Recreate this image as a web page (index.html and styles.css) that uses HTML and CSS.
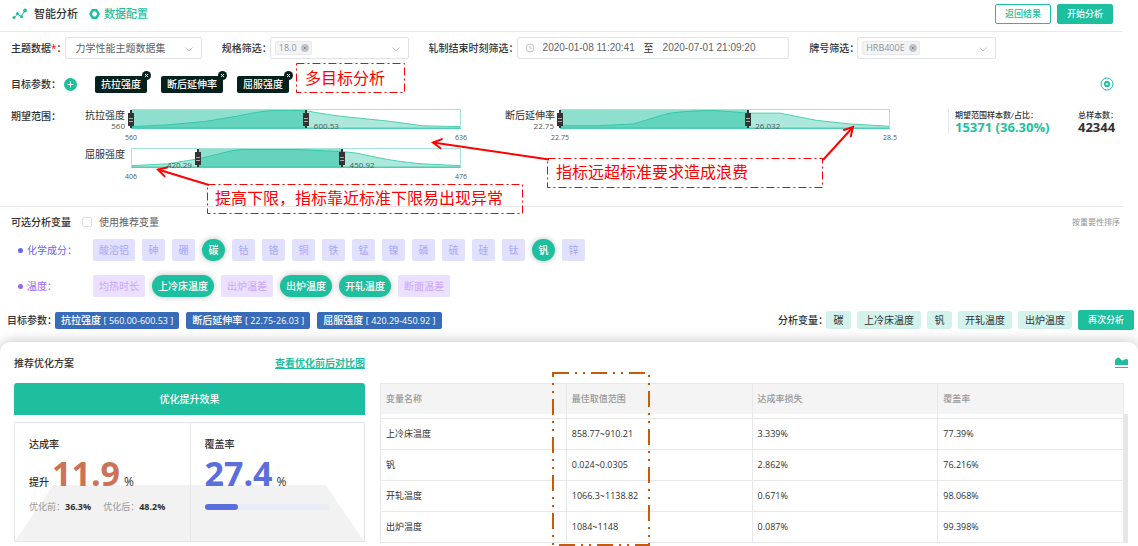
FILE: index.html
```html
<!DOCTYPE html>
<html lang="zh-CN">
<head>
<meta charset="UTF-8">
<title>智能分析</title>
<link rel="stylesheet" href="styles.css">
</head>
<body>
<header class="header">
  <svg class="logo" width="15" height="12" viewBox="0 0 15 12">
    <path d="M2 10L5.500 6L9 8.500L13 2.500" fill="none" stroke="#1dbf9e" stroke-width="1"/>
    <circle cx="2" cy="9.500" r="1.600" fill="#1dbf9e"/><circle cx="5.500" cy="5.500" r="1.500" fill="#1dbf9e"/>
    <circle cx="9.500" cy="8.500" r="1.500" fill="#1dbf9e"/><circle cx="13" cy="2.500" r="1.900" fill="#1dbf9e"/>
  </svg>
  <h1 class="title">智能分析</h1>
  <a class="config" href="#config">
    <svg width="11" height="10" viewBox="0 0 11 10"><path d="M3.500 1.300h4L9.600 5L7.500 8.700h-4L1.400 5z" fill="none" stroke="#1dbf9e" stroke-width="2.500" stroke-linejoin="round"/></svg>
    数据配置
  </a>
  <div class="header-buttons">
    <button class="btn btn-plain">返回结果</button>
    <button class="btn">开始分析</button>
  </div>
</header>

<section class="filters">
  <div class="filter">
    <label class="label" for="dataset">主题数据<span class="required">*</span>：</label>
    <div class="control">
      <select id="dataset"><option>力学性能主题数据集</option></select>
      <svg class="arrow" width="8" height="5" viewBox="0 0 8 5"><path d="M.5.500L4 4L7.500.500"/></svg>
    </div>
  </div>
  <div class="filter">
    <span class="label">规格筛选：</span>
    <div class="control">
      <span class="tag">18.0 <button class="tag-close" aria-label="移除 18.0"><svg width="8" height="8" viewBox="0 0 8 8"><path d="M2.500 2.500l3 3M5.500 2.500l-3 3"/></svg></button></span>
      <svg class="arrow" width="8" height="5" viewBox="0 0 8 5"><path d="M.5.500L4 4L7.500.500"/></svg>
    </div>
  </div>
  <div class="filter filter-wide">
    <label class="label" for="start">轧制结束时刻筛选：</label>
    <div class="control">
      <svg class="clock" width="10" height="10" viewBox="0 0 10 10"><circle cx="5" cy="5" r="4"/><path d="M5 2.500V5.200H7.300"/></svg>
      <input class="date" type="text" id="start" value="2020-01-08 11:20:41">
      <span class="to">至</span>
      <input class="date" type="text" aria-label="结束时刻" value="2020-07-01 21:09:20">
    </div>
  </div>
  <div class="filter">
    <span class="label">牌号筛选：</span>
    <div class="control">
      <span class="tag">HRB400E <button class="tag-close" aria-label="移除 HRB400E"><svg width="8" height="8" viewBox="0 0 8 8"><path d="M2.500 2.500l3 3M5.500 2.500l-3 3"/></svg></button></span>
      <svg class="arrow" width="8" height="5" viewBox="0 0 8 5"><path d="M.5.500L4 4L7.500.500"/></svg>
    </div>
  </div>
</section>

<section class="targets">
  <span class="label">目标参数：</span>
  <button class="add" aria-label="添加"><svg width="13" height="13" viewBox="0 0 13 13"><circle cx="6.500" cy="6.500" r="6.500" fill="#1dbf9e"/><path d="M3.500 6.500h6M6.500 3.500v6" stroke="#fff"/></svg></button>
  <span class="target">抗拉强度<button class="remove" aria-label="移除"><svg width="9" height="9" viewBox="0 0 9 9"><path d="M3 3l3 3M6 3l-3 3"/></svg></button></span>
  <span class="target">断后延伸率<button class="remove" aria-label="移除"><svg width="9" height="9" viewBox="0 0 9 9"><path d="M3 3l3 3M6 3l-3 3"/></svg></button></span>
  <span class="target">屈服强度<button class="remove" aria-label="移除"><svg width="9" height="9" viewBox="0 0 9 9"><path d="M3 3l3 3M6 3l-3 3"/></svg></button></span>
  <button class="settings" aria-label="设置"><svg width="14" height="14" viewBox="0 0 14 14"><circle cx="7" cy="7" r="6" fill="none" stroke="#1dbf9e"/><path d="M5.800 4.900h2.400L9.400 7L8.200 9.100H5.800L4.600 7z" fill="none" stroke="#1dbf9e" stroke-width="2" stroke-linejoin="round"/></svg></button>
</section>

<section class="ranges">
  <span class="label">期望范围：</span>
  <div class="range-grid">
    <div class="range">
      <span class="range-name">抗拉强度</span>
      <div class="chart">
        <svg viewBox="0 0 330 20" preserveAspectRatio="none">
          <path class="area" d="M0 18.500L36 16.500L72 13L105 7Q130 1 143 .5Q160 0 176 1Q200 6 219 8L259 12.500L292 17.500L330 18.500V20H0z"/>
        </svg>
        <div class="selected" style="left: 0%; width: 53.300%"></div>
        <input type="range" aria-label="抗拉强度下限" min="560" max="636" step="any" value="560">
        <input type="range" aria-label="抗拉强度上限" min="560" max="636" step="any" value="600.53">
        <span class="value low" style="right: 100%">560</span>
        <span class="value high" style="left: 53.300%">600.53</span>
        <span class="axis axis-min">560</span><span class="axis axis-max">636</span>
      </div>
    </div>
    <div class="range">
      <span class="range-name">断后延伸率</span>
      <div class="chart">
        <svg viewBox="0 0 330 20" preserveAspectRatio="none">
          <path class="area" d="M0 17.500H37L73 15.500L104 5Q110 3 122 2Q147 0 160 1L188 3.500H220L257 11.500L290 15.500L330 18V20H0z"/>
        </svg>
        <div class="selected" style="left: 0%; width: 57.100%"></div>
        <input type="range" aria-label="断后延伸率下限" min="22.75" max="28.5" step="any" value="22.75">
        <input type="range" aria-label="断后延伸率上限" min="22.75" max="28.5" step="any" value="26.032">
        <span class="value low" style="right: 100%">22.75</span>
        <span class="value high" style="left: 57.100%">26.032</span>
        <span class="axis axis-min">22.75</span><span class="axis axis-max">28.5</span>
      </div>
    </div>
    <div class="range">
      <span class="range-name">屈服强度</span>
      <div class="chart">
        <svg viewBox="0 0 330 20" preserveAspectRatio="none">
          <path class="area" d="M0 18.500L36 16.500L69 10.500L100 2Q108 .5 115 .5H165L211 3Q226 4 234 6.500L256 11.500Q280 15.500 292 16.500L330 18.500V20H0z"/>
        </svg>
        <div class="selected" style="left: 20.400%; width: 43.800%"></div>
        <input type="range" aria-label="屈服强度下限" min="406" max="476" step="any" value="420.29">
        <input type="range" aria-label="屈服强度上限" min="406" max="476" step="any" value="450.92">
        <span class="value low" style="right: 79.600%">420.29</span>
        <span class="value high" style="left: 64.200%">450.92</span>
        <span class="axis axis-min">406</span><span class="axis axis-max">476</span>
      </div>
    </div>
  </div>
  <div class="stats">
    <div class="stat stat-main">期望范围样本数/占比：<strong class="green">15371 (36.30%)</strong></div>
    <div class="stat">总样本数：<strong>42344</strong></div>
  </div>
</section>

<section class="variables">
  <div class="variables-head">
    <h2>可选分析变量</h2>
    <label class="recommend"><input type="checkbox">使用推荐变量</label>
    <span class="sort">按重要性排序</span>
  </div>
  <div class="group chemistry">
    <span class="group-name">化学成分：</span>
    <button class="chip">酸溶铝</button>
    <button class="chip">砷</button>
    <button class="chip">硼</button>
    <button class="chip active">碳</button>
    <button class="chip">钴</button>
    <button class="chip">铬</button>
    <button class="chip">铜</button>
    <button class="chip">铁</button>
    <button class="chip">锰</button>
    <button class="chip">镍</button>
    <button class="chip">磷</button>
    <button class="chip">硫</button>
    <button class="chip">硅</button>
    <button class="chip">钛</button>
    <button class="chip active">钒</button>
    <button class="chip">锌</button>
  </div>
  <div class="group temperature">
    <span class="group-name">温度：</span>
    <button class="chip">均热时长</button>
    <button class="chip active">上冷床温度</button>
    <button class="chip">出炉温差</button>
    <button class="chip active">出炉温度</button>
    <button class="chip active">开轧温度</button>
    <button class="chip">断面温差</button>
  </div>
</section>

<section class="summary">
  <span class="label">目标参数：</span>
  <span class="summary-target">抗拉强度 <small>[ 560.00-600.53 ]</small></span>
  <span class="summary-target">断后延伸率 <small>[ 22.75-26.03 ]</small></span>
  <span class="summary-target">屈服强度 <small>[ 420.29-450.92 ]</small></span>
  <span class="label summary-right">分析变量：</span>
  <span class="summary-var">碳</span>
  <span class="summary-var">上冷床温度</span>
  <span class="summary-var">钒</span>
  <span class="summary-var">开轧温度</span>
  <span class="summary-var">出炉温度</span>
  <button class="btn">再次分析</button>
</section>

<main class="panel">
  <div class="plan">
    <div class="panel-head">
      <h2>推荐优化方案</h2>
      <a href="#compare">查看优化前后对比图</a>
    </div>
    <div class="banner">优化提升效果</div>
    <div class="cards">
      <div class="card">
        <h3>达成率</h3>
        <div class="figure">提升<b class="orange">11.9</b><span class="percent">%</span></div>
        <div class="compare"><span>优化前：<b>36.3%</b></span><span>优化后：<b>48.2%</b></span></div>
      </div>
      <div class="card">
        <h3>覆盖率</h3>
        <div class="figure"><b class="blue">27.4</b><span class="percent">%</span></div>
        <div class="progress"><div class="progress-bar" style="width: 27.400%"></div></div>
      </div>
    </div>
  </div>
  <div class="result">
    <div class="panel-head">
      <button class="chart-toggle" aria-label="图表"><svg width="13" height="12" viewBox="0 0 13 12"><path d="M0 8V3Q2 0 4 .5Q6 3 7.500 3.500Q10 1.500 12 2L13 3V8z" fill="#1dbf9e"/><path d="M0 10.500h13" stroke="#1dbf9e" stroke-width="1"/></svg></button>
    </div>
    <div class="table-wrap">
      <table>
        <thead>
          <tr><th>变量名称</th><th>最佳取值范围</th><th>达成率损失</th><th>覆盖率</th></tr>
        </thead>
        <tbody>
          <tr class="spacer"><td></td><td></td><td></td><td></td></tr>
          <tr><td>上冷床温度</td><td>858.77~910.21</td><td>3.339%</td><td>77.39%</td></tr>
          <tr><td>钒</td><td>0.024~0.0305</td><td>2.862%</td><td>76.216%</td></tr>
          <tr><td>开轧温度</td><td>1066.3~1138.82</td><td>0.671%</td><td>98.068%</td></tr>
          <tr><td>出炉温度</td><td>1084~1148</td><td>0.087%</td><td>99.398%</td></tr>
        </tbody>
      </table>
      <div class="scrollbar"></div>
    </div>
  </div>
</main>

<!-- notes drawn over the page -->
<svg class="notes" width="1138" height="546" viewBox="0 0 1138 546">
  <defs>
    <marker id="head" markerUnits="userSpaceOnUse" markerWidth="14" markerHeight="14" refX="11" refY="7" orient="auto">
      <path d="M2 2L11 7L2 12" fill="none" stroke="#f00" stroke-width="2"/>
    </marker>
  </defs>
  <rect class="note-box" x="296.500" y="63.500" width="108" height="29"/>
  <rect class="note-box" x="547.500" y="158.500" width="275" height="29"/>
  <rect class="note-box" x="207.500" y="184.500" width="315" height="29"/>
  <rect class="note-column" x="553" y="373" width="96" height="172"/>
  <path class="note-line" d="M549 159.500L433 142.500" marker-end="url(#head)"/>
  <path class="note-line" d="M823 160L853 127" marker-end="url(#head)"/>
  <path class="note-line" d="M209 185L158 169.500" marker-end="url(#head)"/>
  <text x="305" y="84">多目标分析</text>
  <text x="556" y="178">指标远超标准要求造成浪费</text>
  <text x="215" y="204">提高下限，指标靠近标准下限易出现异常</text>
</svg>
</body>
</html>
```
FILE: styles.css
```css
* {
  box-sizing: border-box;
}
body {
  margin: 0;
  font-family: "Open Sans", "Noto Sans CJK SC", sans-serif;
  font-size: 10px;
  line-height: 14px;
  color: #303133;
  background: #fff;
}
h1, h2, h3 {
  margin: 0;
  font-size: 10px;
  font-weight: 500;
}
button, input, select {
  font: inherit;
  margin: 0;
}
button {
  padding: 0;
  border: none;
  background: none;
  cursor: pointer;
}
svg {
  display: block;
}
.label {
  flex: none;
  font-weight: 500;
  white-space: nowrap;
}
.filter .label, .summary .label {
  margin-right: -2px; /* the full-width colon has empty space after it */
}
.btn {
  height: 20px;
  width: 56px;
  border: 1px solid #1dbf9e;
  border-radius: 2px;
  background: #1dbf9e;
  color: #fff;
  font-size: 9px;
  font-weight: 500;
  line-height: 12px;
}
.btn-plain {
  background: #fff;
  color: #1dbf9e;
}

/* header */
.header {
  display: flex;
  align-items: center;
  height: 32px;
  margin-right: 15px;
  padding: 0 10px 4px 12px;
  border-bottom: 1px solid #e6e8ec;
}
.title {
  margin: 0 11px 0 7px;
  font-size: 11px;
}
.config {
  display: flex;
  align-items: center;
  gap: 4px;
  font-size: 11px;
  font-weight: 500;
  color: #1dbf9e;
  text-decoration: none;
}
.header-buttons {
  display: flex;
  gap: 6px;
  margin-left: auto;
}

/* filters */
.filters {
  display: flex;
  gap: 20px;
  padding: 5px 142px 5px 11px;
}
.filter {
  display: flex;
  align-items: center;
  flex: 187 1 0;
}
.filter:first-child {
  flex-grow: 191;
}
.filter-wide {
  flex-grow: 361;
}
.required {
  color: #f00;
}
.control {
  flex: 1;
  position: relative;
  display: flex;
  align-items: center;
  height: 22px;
  min-width: 0;
  padding: 0 4px;
  border: 1px solid #dfe2e8;
  border-radius: 2px;
}
.control select {
  width: 100%;
  padding: 0 6px;
  border: none;
  background: none;
  appearance: none;
  color: #606266;
}
.arrow {
  position: absolute;
  right: 8px;
  top: 9px;
  fill: none;
  stroke: #c0c4cc;
}
.tag {
  display: flex;
  align-items: center;
  gap: 4px;
  height: 14px;
  padding: 0 2px 0 3px;
  border: 1px solid #e9e9eb;
  border-radius: 2px;
  background: #f4f4f5;
  color: #909399;
  font-size: 9px;
}
.tag-close {
  border-radius: 50%;
  background: #c0c4cc;
}
.tag-close path {
  stroke: #909399;
}
.clock {
  margin: 0 3px;
  fill: none;
  stroke: #c0c4cc;
}
.date {
  width: 106px;
  min-width: 0;
  padding: 0 5px;
  border: none;
  color: #606266;
  font-family: "Liberation Sans", Arial, sans-serif;
}
.to {
  width: 10px;
  margin-right: 4px;
}

/* target parameters */
.targets {
  display: flex;
  align-items: center;
  height: 24px;
  margin-top: 8px;
  padding: 0 24px 0 11px;
}
.add {
  margin: 0 4px 0 3px;
}
.target {
  position: relative;
  height: 17px;
  margin-left: 14px;
  padding: 0 6px;
  border-radius: 2px;
  background: #05211d;
  color: #fff;
  font-weight: 500;
  line-height: 17px;
}
.remove {
  position: absolute;
  top: -5px;
  right: -4px;
  border-radius: 50%;
  background: #05211d;
}
.remove path {
  stroke: #fff;
}
.settings {
  margin-left: auto;
}

/* expected ranges */
.ranges {
  display: flex;
  align-items: flex-start;
  margin-right: 15px;
  padding: 13px 0 38px 11px;
  border-bottom: 1px solid #e6e8ec;
}
.range-grid {
  flex: 1;
  display: grid;
  grid-template-columns: 1fr 1fr;
  gap: 19px 44px;
  padding: 0 58px 0 15px;
}
.range {
  display: flex;
  justify-content: flex-end;
}
.range-name {
  flex: none;
  width: 55px;
  padding-right: 6px;
  line-height: 12px;
  text-align: right;
  white-space: nowrap;
}
.chart {
  position: relative;
  flex: 1;
  height: 20px;
  border: 1px solid #a5e5d8;
  border-bottom-color: #4dcfb2;
}
.chart svg {
  width: 100%;
  height: 100%;
}
.area {
  fill: rgba(29, 191, 158, 0.36);
  stroke: #4dcfb2;
  vector-effect: non-scaling-stroke;
}
.selected {
  position: absolute;
  top: 0;
  bottom: 0;
  background: rgba(29, 191, 158, 0.5);
}
.chart input {
  position: absolute;
  top: 0;
  left: -4px;
  width: calc(100% + 7px);
  height: 18px;
  background: none;
  appearance: none;
  pointer-events: none;
}
.chart input::-webkit-slider-thumb {
  appearance: none;
  width: 6px;
  height: 18px;
  background:
    linear-gradient(#aaa, #aaa) center 8px / 4px 1px no-repeat,
    linear-gradient(#aaa, #aaa) center 11px / 4px 1px no-repeat,
    linear-gradient(#333, #333) center / 6px 13px no-repeat,
    linear-gradient(#333, #333) center / 2px 18px no-repeat;
  pointer-events: auto;
}
.value, .axis {
  position: absolute;
  font-size: 8px;
  line-height: 10px;
  white-space: nowrap;
  color: #4d5a58;
}
.value {
  top: 11px;
}
.low {
  margin-right: 7px;
}
.high {
  margin-left: 7px;
}
.axis {
  top: 23px;
  width: 30px;
  font-size: 7px;
  text-align: center;
}
.axis-min {
  left: -16px;
}
.axis-max {
  right: -16px;
}
.stats {
  display: flex;
  flex: none;
  gap: 26px;
  height: 25px;
  border-left: 1px solid #e6e8ec;
  padding-left: 6px;
}
.stat {
  width: 45px;
  font-size: 8px;
  font-weight: 500;
  line-height: 11px;
  white-space: nowrap;
}
.stat-main {
  width: 97px;
}
.stat strong {
  display: block;
  font-size: 13px;
  line-height: 15px;
}
.green {
  color: #1dbf9e;
}

/* variables */
.variables-head {
  display: flex;
  align-items: center;
  height: 30px;
  padding: 0 18px 0 11px;
}
.recommend {
  display: flex;
  align-items: center;
  gap: 7px;
  margin-left: 11px;
  color: #606266;
}
.recommend input {
  width: 10px;
  height: 10px;
  border: 1px solid #dcdfe6;
  border-radius: 2px;
  appearance: none;
}
.sort {
  margin-left: auto;
  font-size: 8px;
  color: #909399;
}
.group {
  display: flex;
  align-items: center;
  gap: 7px;
  margin-top: 2px;
  padding-left: 18px;
}
.group + .group {
  margin-top: 14px;
}
.group-name {
  display: flex;
  align-items: center;
  gap: 4px;
  width: 68px;
}
.group-name::before {
  content: "";
  width: 5px;
  height: 5px;
  border-radius: 50%;
  background: currentColor;
}
.chip {
  min-width: 23px;
  height: 22px;
  padding: 0 6px;
  border-radius: 2px;
}
.chemistry .group-name {
  color: #6466f0;
}
.chemistry .chip {
  background: #e1e0ff;
  color: #a9a8f7;
}
.temperature .group-name {
  color: #9a66f5;
}
.temperature .chip {
  background: #ebe0ff;
  color: #c8a8f8;
}
.group .chip.active {
  border-radius: 11px;
  background: #1dbf9e;
  color: #fff;
  font-weight: 500;
  box-shadow: 0 0 6px rgba(0, 0, 0, 0.25);
}

/* summary */
.summary {
  display: flex;
  align-items: center;
  margin-top: 13px;
  padding: 0 4px 0 7px;
}
.summary-target {
  height: 17px;
  margin-right: 7px;
  padding: 0 6px;
  border-radius: 2px;
  background: #386cb8;
  color: #fff;
  font-weight: 500;
  line-height: 17px;
  white-space: nowrap;
}
.summary-target small {
  font-size: 9px;
  font-weight: 400;
}
.summary-right {
  margin-left: auto;
}
.summary-var {
  min-width: 25px;
  height: 18px;
  margin-right: 6px;
  padding: 0 7px;
  border-radius: 3px;
  background: #d2f2eb;
  line-height: 18px;
  text-align: center;
}

/* result panel */
.panel {
  display: flex;
  gap: 15px;
  margin-top: 12px;
  padding: 0 10px 4px 14px;
  border-radius: 10px 10px 0 0;
  background: #fff;
  box-shadow: 0 0 14px rgba(0, 0, 0, 0.25);
}
.panel-head {
  display: flex;
  align-items: center;
  justify-content: space-between;
  height: 41px;
}
.panel-head a {
  color: #1dbf9e;
  font-weight: 700;
}
.plan {
  flex: 351 1 0;
}
.result {
  flex: 748 1 0;
}
.banner {
  height: 32px;
  border-radius: 3px 3px 0 0;
  background: #1dbf9e;
  color: #fff;
  font-weight: 500;
  line-height: 32px;
  text-align: center;
}
.cards {
  position: relative;
  display: grid;
  grid-template-columns: 1fr 1fr;
  height: 120px;
  margin-top: 7px;
  border: 1px solid #e6e6e6;
}
.cards::before {
  content: "";
  position: absolute;
  bottom: 0;
  width: 100%;
  height: 56px;
  background: #f2f2f2;
  clip-path: polygon(11% 0, 89% 0, 100% 100%, 0 100%);
}
.card {
  position: relative;
  padding: 14px;
}
.card + .card {
  border-left: 1px solid #e6e6e6;
}
.figure {
  display: flex;
  align-items: baseline;
  height: 40px;
  margin-top: 2px;
  font-weight: 500;
  line-height: 40px;
}
.figure b {
  font-size: 34px;
}
.orange {
  margin-left: 3px;
  color: #cb7259;
}
.blue {
  color: #5b6fdc;
}
.percent {
  margin-left: 4px;
  font-size: 12px;
}
.compare {
  display: flex;
  gap: 12px;
  margin-top: 7px;
  font-size: 9px;
  color: #999;
}
.compare b {
  color: #303133;
}
.progress {
  width: 124px;
  height: 6px;
  margin-top: 11px;
  border-radius: 3px;
  background: #e9ecf5;
}
.progress-bar {
  height: 6px;
  border-radius: 3px;
  background: #5b6fdc;
}
.chart-toggle {
  margin-left: auto;
}
.table-wrap {
  display: flex;
}
table {
  flex: 1;
  width: 100%;
  table-layout: fixed;
  border-collapse: collapse;
  font-size: 9px;
  line-height: 12px;
}
th, td {
  height: 30px;
  padding: 0 5px;
  border: 1px solid #e8e8e8;
  text-align: left;
}
td {
  height: 31px;
}
th {
  border-bottom: none;
  background: #f4f4f4;
  color: #999;
  font-weight: 500;
}
.spacer td {
  height: 5px;
  border-top: none;
}
.scrollbar {
  flex: none;
  width: 4px;
  margin-top: 31px;
  background: #e6e6e6;
}

/* notes */
.notes {
  position: absolute;
  top: 0;
  left: 0;
  pointer-events: none;
}
.notes text {
  fill: #f00;
  font-size: 16px;
}
.note-box {
  fill: none;
  stroke: #f00;
  stroke-dasharray: 8 3 2 3;
}
.note-line {
  fill: none;
  stroke: #f00;
  stroke-width: 2;
}
.note-column {
  fill: none;
  stroke: #c55a11;
  stroke-width: 2;
  stroke-dasharray: 16 6 2 6 2 6;
}
```
